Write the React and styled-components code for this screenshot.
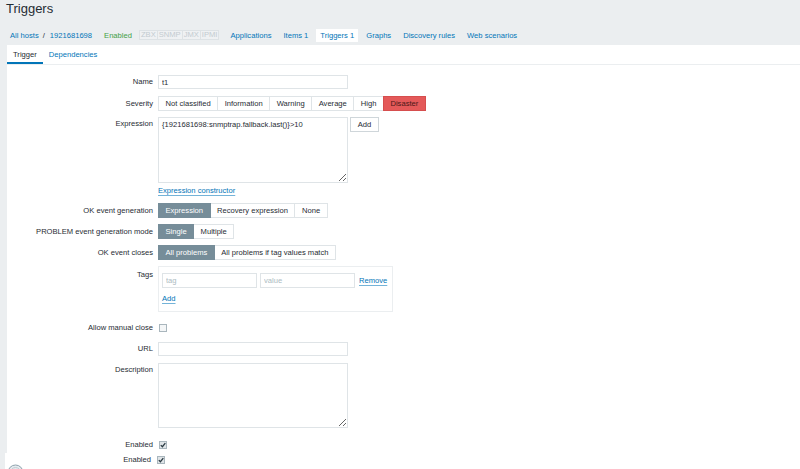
import React from 'react';
import styled, { createGlobalStyle, css } from 'styled-components';

const C = {
  text: '#1f2c33',
  link: '#0275b8',
  border: '#dfe4e7',
  sel: '#768d99',
  bg: '#ebeef0',
};

const Global = createGlobalStyle`
  html, body { margin: 0; padding: 0; background: ${C.bg}; overflow: hidden; }
  body { font-family: "Liberation Sans", Arial, sans-serif; font-size: 7.6px; color: ${C.text}; }
  *, *::before, *::after { box-sizing: border-box; }
`;

const Page = styled.div`
  width: 800px;
  height: 469px;
  overflow: hidden;
`;

const Title = styled.h1`
  margin: 0;
  height: 25px;
  padding-left: 6px;
  font-size: 13px;
  line-height: 17px;
  font-weight: normal;
  color: ${C.text};
`;

const NavBar = styled.div`
  height: 20px;
  display: flex;
  align-items: center;
  padding-left: 10px;
  white-space: nowrap;
`;

const Crumb = styled.a`
  color: ${C.link};
  text-decoration: none;
`;

const Sep = styled.span`
  margin: 0 5px 0 4px;
  color: ${C.text};
`;

const Status = styled.span`
  color: #429e47;
  margin-left: 12px;
`;

const Badges = styled.div`
  display: flex;
  margin-left: 7px;
`;

const Badge = styled.span`
  border: 1px solid #dde2e5;
  padding: 0 1px;
  height: 10px;
  line-height: 8px;
  color: #c3cbd0;
  background: #eff1f3;
  & + & { margin-left: -1px; }
`;

const NavList = styled.div`
  display: flex;
  gap: 4px;
  margin-left: 7px;
`;

const NavItem = styled.a`
  padding: 0 4px;
  line-height: 13px;
  color: ${C.link};
  background: ${(p) => (p.$active ? '#fff' : 'transparent')};
`;

const Panel = styled.div`
  margin-left: 7px;
  height: 408px;
  background: #fff;
`;

const Tabs = styled.div`
  display: flex;
  height: 20px;
  border-bottom: 1px solid ${C.bg};
`;

const Tab = styled.a`
  padding: 0 6px;
  height: 19px;
  line-height: 19px;
  color: ${(p) => (p.$active ? C.text : C.link)};
  ${(p) => p.$active && css`box-shadow: inset 0 -2px 0 ${C.link};`}
`;

const Form = styled.div`
  padding-top: 10px;
  display: flex;
  flex-direction: column;
`;

const Row = styled.div`
  display: grid;
  grid-template-columns: 146px auto;
  column-gap: ${(p) => p.$gap ?? 5}px;
  align-items: start;
  margin-top: ${(p) => p.$mt || 0}px;
  height: ${(p) => (p.$h ? `${p.$h}px` : 'auto')};
`;

const Label = styled.div`
  text-align: right;
  white-space: nowrap;
  line-height: ${(p) => p.$lh || 14}px;
  padding-top: ${(p) => p.$pt || 0}px;
`;

const Field = styled.div`
  display: flex;
  flex-direction: ${(p) => (p.$col ? 'column' : 'row')};
  align-items: flex-start;
`;

const TextInput = styled.input`
  width: ${(p) => p.$w || 190}px;
  height: ${(p) => p.$h || 14}px;
  border: 1px solid ${C.border};
  padding: 0 3px;
  font: inherit;
  color: ${C.text};
  background: #fff;
  outline: none;
  &::placeholder { color: #acbbc2; }
`;

const TextArea = styled.textarea`
  width: 190px;
  height: ${(p) => p.$h}px;
  border: 1px solid ${C.border};
  padding: 1px 3px;
  font: inherit;
  line-height: 11px;
  color: ${C.text};
  background: #fff;
  outline: none;
  resize: both;
  display: block;
  margin: 0;
`;

const Button = styled.button`
  margin-left: 2px;
  width: 29px;
  height: 15px;
  padding: 0;
  border: 1px solid #cfd6da;
  background: #fff;
  font: inherit;
  color: ${C.text};
`;

const Segmented = styled.div`
  display: flex;
`;

const Seg = styled.span`
  height: 15px;
  line-height: 13px;
  padding: 0 6.5px;
  border: 1px solid ${C.border};
  background: #fff;
  color: ${C.text};
  white-space: nowrap;
  & + & { margin-left: -1px; }
  ${(p) => p.$active && css`
    background: ${p.$color || C.sel};
    border-color: ${p.$color ? '#d64e4e' : C.sel};
    color: ${p.$color ? '#4a1818' : '#fff'};
    position: relative;
  `}
`;

const ActionLink = styled.a`
  color: ${C.link};
  line-height: 12px;
  text-decoration: underline;
  text-decoration-color: rgba(2, 117, 184, 0.55);
  text-underline-offset: 1.5px;
  margin-top: ${(p) => p.$mt || 0}px;
  margin-left: ${(p) => p.$ml || 0}px;
`;

const TagsBox = styled.div`
  width: 235px;
  border: 1px solid ${C.bg};
  padding: 6px 3px;
  display: flex;
  flex-direction: column;
  align-items: flex-start;
`;

const TagLine = styled.div`
  display: flex;
  align-items: center;
  gap: 3px;
`;

const Check = styled.span`
  display: inline-flex;
  align-items: center;
  justify-content: center;
  width: 8px;
  height: 8px;
  margin-top: 3px;
  margin-left: 1px;
  border: 1px solid #a9b6bd;
  background: ${(p) => (p.$on ? '#dfe4e7' : '#f4f6f7')};
`;

const Footer = styled.div`
  margin-left: 5px;
  height: 16px;
  background: #fff;
`;

const FootLabel = styled(Label)`
  display: flex;
  justify-content: space-between;
  align-items: flex-start;
`;

const Avatar = styled.svg`
  margin-top: 11px;
  margin-left: 2px;
  flex: none;
`;

const CheckBox = ({ on }) => (
  <Check $on={on}>
    {on && (
      <svg width="6" height="6" viewBox="0 0 6 6">
        <path d="M0.8 3.1 L2.4 4.7 L5.3 1.2" fill="none" stroke="#2b3a42" strokeWidth="1.3" />
      </svg>
    )}
  </Check>
);

export default function App() {
  return (
    <Page>
      <Global />
      <Title>Triggers</Title>
      <NavBar>
        <Crumb>All hosts</Crumb>
        <Sep>/</Sep>
        <Crumb>1921681698</Crumb>
        <Status>Enabled</Status>
        <Badges>
          <Badge>ZBX</Badge>
          <Badge>SNMP</Badge>
          <Badge>JMX</Badge>
          <Badge>IPMI</Badge>
        </Badges>
        <NavList>
          <NavItem>Applications</NavItem>
          <NavItem>Items 1</NavItem>
          <NavItem $active>Triggers 1</NavItem>
          <NavItem>Graphs</NavItem>
          <NavItem>Discovery rules</NavItem>
          <NavItem>Web scenarios</NavItem>
        </NavList>
      </NavBar>
      <Panel>
        <Tabs>
          <Tab $active>Trigger</Tab>
          <Tab>Dependencies</Tab>
        </Tabs>
        <Form>
          <Row>
            <Label>Name</Label>
            <Field>
              <TextInput defaultValue="t1" />
            </Field>
          </Row>
          <Row $mt={7}>
            <Label $lh={15}>Severity</Label>
            <Segmented>
              <Seg>Not classified</Seg>
              <Seg>Information</Seg>
              <Seg>Warning</Seg>
              <Seg>Average</Seg>
              <Seg>High</Seg>
              <Seg $active $color="#e45959">Disaster</Seg>
            </Segmented>
          </Row>
          <Row $mt={6}>
            <Label>Expression</Label>
            <Field $col>
              <Field>
                <TextArea $h={66} defaultValue="{1921681698:snmptrap.fallback.last()}>10" />
                <Button>Add</Button>
              </Field>
              <ActionLink $mt={2}>Expression constructor</ActionLink>
            </Field>
          </Row>
          <Row $mt={6}>
            <Label $lh={15}>OK event generation</Label>
            <Segmented>
              <Seg $active>Expression</Seg>
              <Seg>Recovery expression</Seg>
              <Seg>None</Seg>
            </Segmented>
          </Row>
          <Row $mt={6}>
            <Label $lh={15}>PROBLEM event generation mode</Label>
            <Segmented>
              <Seg $active>Single</Seg>
              <Seg>Multiple</Seg>
            </Segmented>
          </Row>
          <Row $mt={6}>
            <Label $lh={15}>OK event closes</Label>
            <Segmented>
              <Seg $active>All problems</Seg>
              <Seg>All problems if tag values match</Seg>
            </Segmented>
          </Row>
          <Row $mt={6}>
            <Label $pt={2}>Tags</Label>
            <TagsBox>
              <TagLine>
                <TextInput $w={95} $h={15} placeholder="tag" />
                <TextInput $w={95} $h={15} placeholder="value" />
                <ActionLink $ml={1}>Remove</ActionLink>
              </TagLine>
              <ActionLink $mt={5}>Add</ActionLink>
            </TagsBox>
          </Row>
          <Row $mt={9} $h={14}>
            <Label>Allow manual close</Label>
            <Field>
              <CheckBox />
            </Field>
          </Row>
          <Row $mt={7}>
            <Label>URL</Label>
            <Field>
              <TextInput />
            </Field>
          </Row>
          <Row $mt={7}>
            <Label>Description</Label>
            <Field>
              <TextArea $h={65} />
            </Field>
          </Row>
          <Row $mt={10} $h={14}>
            <Label>Enabled</Label>
            <Field>
              <CheckBox on />
            </Field>
          </Row>
        </Form>
      </Panel>
      <Footer>
        <Row $h={14} $gap={5}>
          <FootLabel>
            <Avatar width="17" height="17" viewBox="0 0 17 17">
              <circle cx="8.5" cy="8.5" r="7.5" fill="#e4eaee" stroke="#8ea2ad" strokeWidth="1" />
              <circle cx="8.5" cy="8.5" r="5" fill="none" stroke="#c0ccd3" strokeWidth="1" />
            </Avatar>
            <span>Enabled</span>
          </FootLabel>
          <Field>
            <CheckBox on />
          </Field>
        </Row>
      </Footer>
    </Page>
  );
}
